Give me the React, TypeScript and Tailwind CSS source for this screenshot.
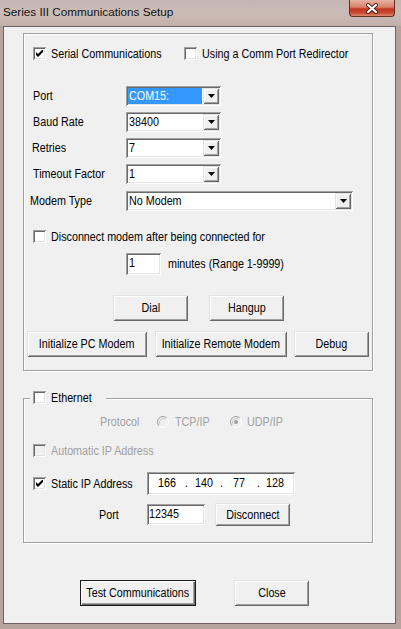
import React from "react";

const SUNKEN =
  "shadow-[inset_1px_1px_0_#a0a0a0,inset_-1px_-1px_0_#ffffff,inset_2px_2px_0_#696969,inset_-2px_-2px_0_#e3e3e3]";

function T({ children, className = "" }: { children: React.ReactNode; className?: string }) {
  return (
    <span className={"inline-block whitespace-nowrap origin-left scale-x-[0.86] " + className}>{children}</span>
  );
}

function Check({ checked = false, disabled = false }: { checked?: boolean; disabled?: boolean }) {
  return (
    <div
      className={
        "w-[13px] h-[13px] shrink-0 flex items-center justify-center shadow-[inset_1px_1px_0_#a0a0a0,inset_-1px_-1px_0_#ffffff,inset_2px_2px_0_#696969,inset_-2px_-2px_0_#e3e3e3] " +
        (disabled ? "bg-[#f0f0f0]" : "bg-white")
      }
    >
      {checked && (
        <svg width="7" height="7" viewBox="0 0 7 7">
          <path d="M0 2 L2 4 L7 -1 L7 2 L2 7 L0 5 Z" fill={disabled ? "#a0a0a0" : "#000"} />
        </svg>
      )}
    </div>
  );
}

function Radio({ dot = false }: { dot?: boolean }) {
  return (
    <svg width="12" height="12" viewBox="0 0 12 12" className="shrink-0">
      <circle cx="6" cy="6" r="5" fill="#f0f0f0" />
      <path d="M2.11 9.89 A5.5 5.5 0 0 1 9.89 2.11" stroke="#a0a0a0" strokeWidth="1" fill="none" />
      <path d="M9.89 2.11 A5.5 5.5 0 0 1 2.11 9.89" stroke="#ffffff" strokeWidth="1" fill="none" />
      <path d="M3 8.5 A4 4 0 0 1 8.5 3" stroke="#c8c8c8" strokeWidth="1" fill="none" />
      {dot && <circle cx="6" cy="6" r="2" fill="#a0a0a0" />}
    </svg>
  );
}

function Arrow() {
  return (
    <svg width="7" height="4" viewBox="0 0 7 4">
      <path d="M0 0 H7 L3.5 4 Z" fill="#000" />
    </svg>
  );
}

function Combo({ value, w, selected = false }: { value: string; w: string; selected?: boolean }) {
  return (
    <div className={"h-[20px] bg-white flex p-[2px] " + w + " " + SUNKEN}>
      <div
        className={
          "flex-1 flex items-center pl-[1px] mr-[1px] " + (selected ? "bg-[#3399ff] text-white" : "text-black")
        }
      >
        <T>{value}</T>
      </div>
      <div className="w-[16px] h-[16px] bg-[#f0f0f0] flex items-center justify-center shadow-[inset_1px_1px_0_#e3e3e3,inset_-1px_-1px_0_#696969,inset_2px_2px_0_#ffffff,inset_-2px_-2px_0_#a0a0a0]">
        <Arrow />
      </div>
    </div>
  );
}

function Btn({ children, className = "", def = false }: { children: React.ReactNode; className?: string; def?: boolean }) {
  return (
    <div
      className={
        "flex items-center justify-center bg-[#f0f0f0] " +
        (def
          ? "border border-[#1a1a1a] shadow-[inset_1px_1px_0_#ffffff,inset_-1px_-1px_0_#696969,inset_-2px_-2px_0_#a0a0a0] "
          : "shadow-[inset_1px_1px_0_#e3e3e3,inset_-1px_-1px_0_#696969,inset_2px_2px_0_#ffffff,inset_-2px_-2px_0_#a0a0a0] ") +
        className
      }
    >
      <span className="inline-block whitespace-nowrap origin-center scale-x-[0.86]">{children}</span>
    </div>
  );
}

export default function App() {
  return (
    <div className="w-[401px] h-[629px] bg-[#b8a49e] flex flex-col font-['Liberation_Sans',Arial,sans-serif] text-[12.5px] leading-[14px] text-black overflow-hidden">
      {/* Title bar */}
      <div className="h-[26px] shrink-0 flex items-start bg-[linear-gradient(180deg,#c6b5b0_0%,#cbbcb7_50%,#c2afa9_100%)]">
        <div className="pl-[3px] pt-[5px] text-[11.7px] text-[#141414] whitespace-nowrap">
          Series III Communications Setup
        </div>
        <div className="ml-auto mr-[6px] w-[46px] h-[17px] rounded-b-[4px] border border-t-0 border-[#6b2c20] bg-[linear-gradient(180deg,#e7b2a4_0%,#d9806b_45%,#c2381f_55%,#c54a31_80%,#e08a70_100%)] flex items-center justify-center">
          <svg width="14" height="11" viewBox="0 0 14 11">
            <path d="M3 2 L11 9 M11 2 L3 9" stroke="#4a1d15" strokeWidth="4" strokeLinecap="round" />
            <path d="M3 2 L11 9 M11 2 L3 9" stroke="#ffffff" strokeWidth="2.2" strokeLinecap="round" />
          </svg>
        </div>
      </div>

      {/* Client */}
      <div className="flex">
        <div className="w-[393px] h-[598px] ml-[3px] border border-[#6e6360] bg-[#f0f0f0] pl-[19px] pt-[6px]">
          {/* Group 1 */}
          <div className="w-[350px] h-[338px] border border-[#a0a0a0] shadow-[inset_1px_1px_0_#ffffff,1px_1px_0_#ffffff]">
            <div className="mt-[13px] h-[13px] flex items-center">
              <div className="w-[162px] flex items-center pl-[9px]">
                <Check checked />
                <T className="ml-[5px]">Serial Communications</T>
              </div>
              <Check />
              <T className="ml-[5px]">Using a Comm Port Redirector</T>
            </div>

            <div className="mt-[26px] h-[20px] flex items-center">
              <div className="w-[102px] pl-[9px]"><T>Port</T></div>
              <Combo value="COM15:" w="w-[95px]" selected />
            </div>
            <div className="mt-[6px] h-[20px] flex items-center">
              <div className="w-[102px] pl-[9px]"><T>Baud Rate</T></div>
              <Combo value="38400" w="w-[95px]" />
            </div>
            <div className="mt-[6px] h-[20px] flex items-center">
              <div className="w-[102px] pl-[8px]"><T>Retries</T></div>
              <Combo value="7" w="w-[95px]" />
            </div>
            <div className="mt-[6px] h-[20px] flex items-center">
              <div className="w-[102px] pl-[9px]"><T>Timeout Factor</T></div>
              <Combo value="1" w="w-[95px]" />
            </div>
            <div className="mt-[7px] h-[20px] flex items-center">
              <div className="w-[102px] pl-[6px]"><T>Modem Type</T></div>
              <Combo value="No Modem" w="w-[227px]" />
            </div>

            <div className="mt-[19px] h-[13px] flex items-center pl-[9px]">
              <Check />
              <T className="ml-[5px]">Disconnect modem after being connected for</T>
            </div>

            <div className="mt-[10px] h-[22px] flex items-center">
              <div className={"ml-[102px] w-[35px] h-[22px] bg-white pl-[3px] pt-[3px] " + SUNKEN}>
                <T>1</T>
              </div>
              <T className="ml-[7px]">minutes (Range 1-9999)</T>
            </div>

            <div className="mt-[20px] h-[26px] flex pl-[89px]">
              <Btn className="w-[75px] h-[26px]">Dial</Btn>
              <Btn className="ml-[21px] w-[75px] h-[26px]">Hangup</Btn>
            </div>

            <div className="mt-[10px] h-[26px] flex pl-[3px]">
              <Btn className="w-[120px] h-[26px]">Initialize PC Modem</Btn>
              <Btn className="ml-[8px] w-[132px] h-[26px]">Initialize Remote Modem</Btn>
              <Btn className="ml-[7px] w-[75px] h-[26px]">Debug</Btn>
            </div>
          </div>

          {/* Group 2 */}
          <div className="relative mt-[27px] w-[350px] h-[145px] border border-[#a0a0a0] shadow-[inset_1px_1px_0_#ffffff,1px_1px_0_#ffffff]">
            <div className="absolute left-[6px] top-[-8px] h-[13px] pl-[3px] pr-[8px] bg-[#f0f0f0] flex items-center">
              <Check />
              <T className="ml-[5px]">Ethernet</T>
            </div>

            <div className="mt-[16px] h-[14px] flex items-center text-[#a0a0a0]">
              <div className="ml-[76px] w-[57px]"><T>Protocol</T></div>
              <Radio />
              <div className="ml-[6px] w-[55px]"><T>TCP/IP</T></div>
              <Radio dot />
              <T className="ml-[5px]">UDP/IP</T>
            </div>

            <div className="mt-[15px] h-[13px] flex items-center pl-[9px] text-[#a0a0a0]">
              <Check disabled />
              <T className="ml-[5px]">Automatic IP Address</T>
            </div>

            <div className="mt-[15px] h-[23px] flex items-center">
              <div className="w-[123px] pl-[9px] flex items-center">
                <Check checked />
                <T className="ml-[5px]">Static IP Address</T>
              </div>
              <div className={"w-[148px] h-[23px] bg-white flex items-center pl-[11px] pb-[2px] " + SUNKEN}>
                <div className="w-[27px]"><T>166</T></div>
                <div className="w-[10px]"><T>.</T></div>
                <div className="w-[25px]"><T>140</T></div>
                <div className="w-[13px]"><T>.</T></div>
                <div className="w-[24px]"><T>77</T></div>
                <div className="w-[9px]"><T>.</T></div>
                <T>128</T>
              </div>
            </div>

            <div className="mt-[8px] h-[23px] flex items-center">
              <div className="w-[123px] pl-[75px]"><T>Port</T></div>
              <div className={"w-[58px] h-[21px] bg-white pl-[2px] pt-[3px] " + SUNKEN}>
                <T>12345</T>
              </div>
              <Btn className="ml-[10px] w-[75px] h-[23px]">Disconnect</Btn>
            </div>
          </div>

          {/* Bottom buttons */}
          <div className="mt-[37px] flex">
            <Btn def className="ml-[57px] w-[116px] h-[26px]">Test Communications</Btn>
            <Btn className="ml-[38px] w-[75px] h-[26px]">Close</Btn>
          </div>
        </div>
      </div>
    </div>
  );
}
